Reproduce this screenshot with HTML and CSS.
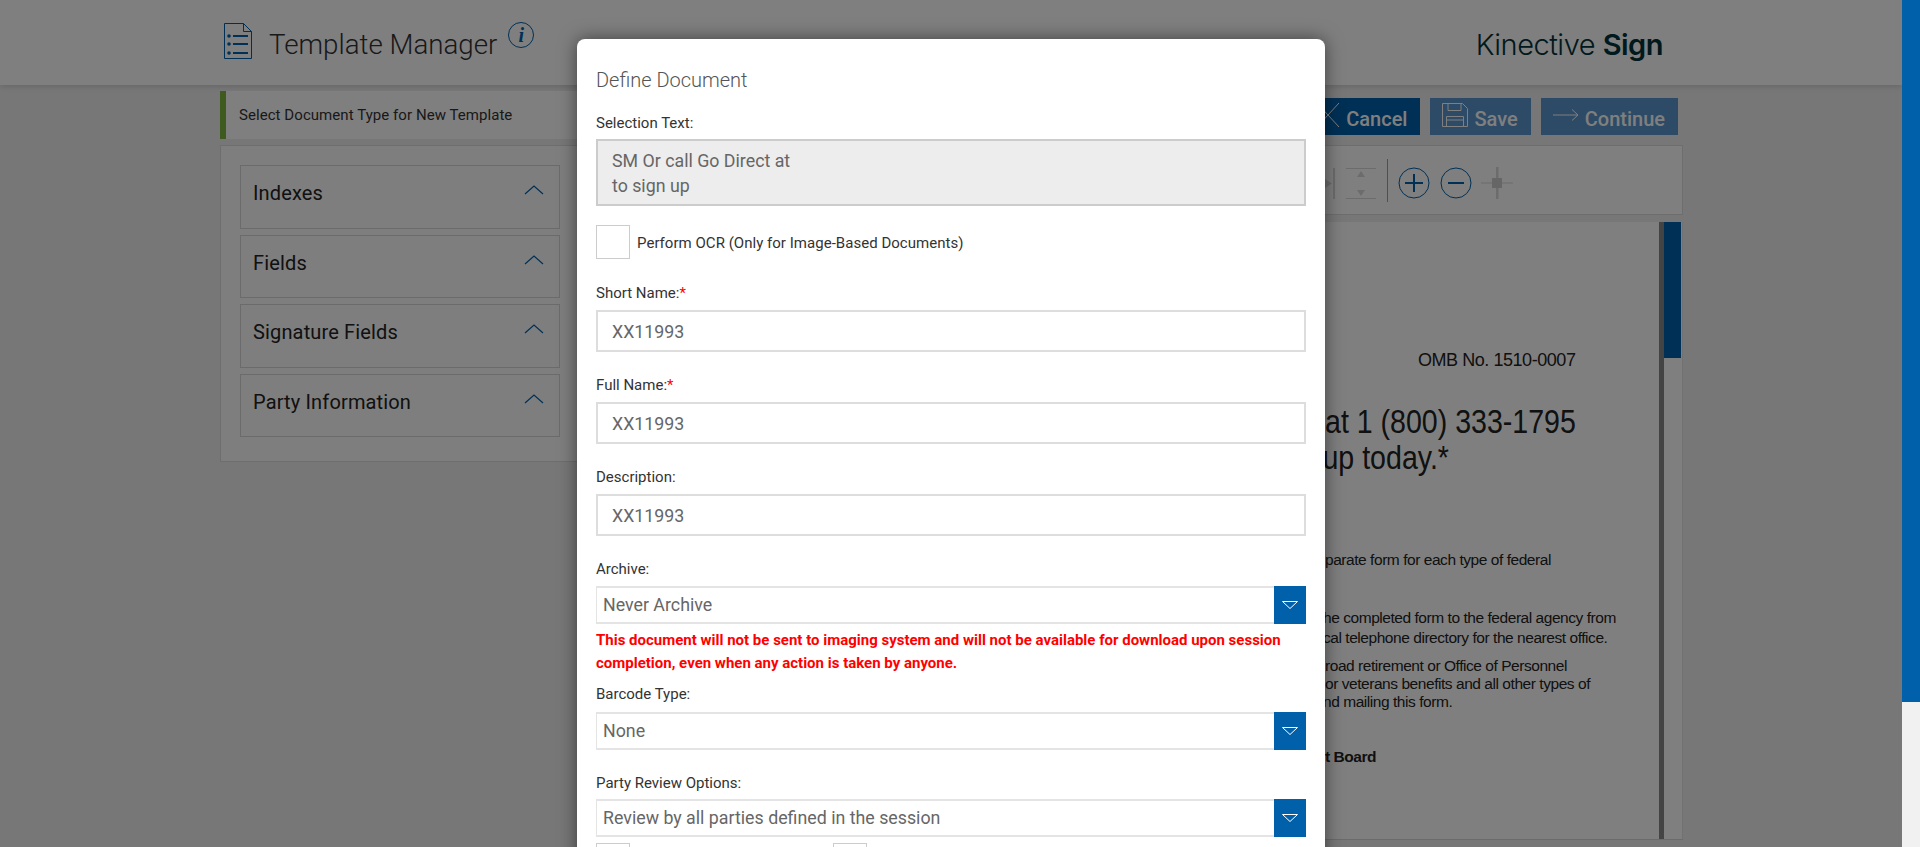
FILE: index.html
```html
<!DOCTYPE html>
<html lang="en">

<head>
    <meta charset="UTF-8">
    <title>Template Manager</title>
    <link rel="stylesheet" href="styles.css">
</head>

<body>
    <div class="page">
        <header class="header">
            <div class="brand">
                <svg class="brand-icon" width="28" height="36" viewBox="0 0 28 36" fill="none" stroke="#0060aa">
                    <path d="M.5.5h19l8 8v27H.5z" />
                    <path d="M19.5.5v8h8" />
                    <path d="M9 13h15M9 21h15M9 30h15" stroke-width="2" />
                    <circle cx="5" cy="13" r="1.8" fill="#0060aa" stroke="none" />
                    <circle cx="5" cy="21" r="1.8" fill="#0060aa" stroke="none" />
                    <circle cx="5" cy="30" r="1.8" fill="#0060aa" stroke="none" />
                </svg>
                <h1 class="brand-title">Template Manager</h1>
                <span class="info-badge">i</span>
            </div>
            <div class="logo">Kinective <b>Sign</b></div>
        </header>

        <main class="main">
            <div class="top-row">
                <div class="notice">Select Document Type for New Template</div>
                <div class="actions">
                    <a class="btn btn-cancel">
                        <svg width="24" height="24" viewBox="0 0 24 24" fill="none" stroke="#fff"><path d="M1 0l22 24M23 0L1 24" /></svg>
                        Cancel
                    </a>
                    <a class="btn btn-off">
                        <svg width="26" height="24" viewBox="0 0 26 24" fill="none" stroke="#fff"><path d="M.5.5h20l5 5v18H.5z" /><path d="M6 .5v7h13v-7M4.500 23.500v-10h17v10M4.500 17h17" /></svg>
                        Save
                    </a>
                    <a class="btn btn-off">
                        <svg width="26" height="12" viewBox="0 0 26 12" fill="none" stroke="#fff"><path d="M0 6h25M19 .5L25 6l-6 5.500" /></svg>
                        Continue
                    </a>
                </div>
            </div>

            <div class="content">
                <aside class="side-panel">
                    <div class="acc-item"><span>Indexes</span><svg class="chev" width="20" height="10" viewBox="0 0 20 10"><path d="M1 9l9-8 9 8" /></svg></div>
                    <div class="acc-item"><span>Fields</span><svg class="chev" width="20" height="10" viewBox="0 0 20 10"><path d="M1 9l9-8 9 8" /></svg></div>
                    <div class="acc-item"><span>Signature Fields</span><svg class="chev" width="20" height="10" viewBox="0 0 20 10"><path d="M1 9l9-8 9 8" /></svg></div>
                    <div class="acc-item"><span>Party Information</span><svg class="chev" width="20" height="10" viewBox="0 0 20 10"><path d="M1 9l9-8 9 8" /></svg></div>
                </aside>

                <section class="viewer">
                    <div class="toolbar">
                        <svg class="tool tool-h" width="10" height="31" viewBox="0 0 10 31" fill="#d8d8d8"><path d="M0 11l7 4.500L0 20z" /><path d="M8 0h2v31H8z" /></svg>
                        <svg class="tool tool-v" width="30" height="31" viewBox="0 0 30 31" fill="#d8d8d8"><path d="M0 0h30v1H0zM0 30h30v1H0zM15 3l4 6h-8zM15 28l-4-6h8z" /></svg>
                        <span class="tool-sep"></span>
                        <svg class="tool tool-zoom" width="32" height="32" viewBox="0 0 32 32" fill="none" stroke="#0060aa"><circle cx="16" cy="16" r="15" /><path d="M16 7v18M7 16h18" stroke-width="2" /></svg>
                        <svg class="tool tool-zoom" width="32" height="32" viewBox="0 0 32 32" fill="none" stroke="#0060aa"><circle cx="16" cy="16" r="15" /><path d="M8 16h16" stroke-width="2" /></svg>
                        <svg class="tool tool-fit" width="32" height="32" viewBox="0 0 32 32" fill="#d8d8d8"><path d="M0 15.500h32v1H0zM15 0h2.500v32H15z" /><path d="M11 11h10v10H11z" fill="#ccc" /></svg>
                    </div>
                    <div class="doc">
                        <div class="doc-page">
                            <p class="doc-omb">OMB No. 1510-0007</p>
                            <p class="doc-big">at 1 (800) 333-1795<br><span class="doc-big2">up today.*</span></p>
                            <p class="doc-p doc-p1">parate form for each type of federal</p>
                            <p class="doc-p doc-p2"><span class="doc-in1">he completed form to the federal agency from</span><br><span class="doc-in2">cal telephone directory for the nearest office.</span></p>
                            <p class="doc-p doc-p3">road retirement or Office of Personnel<br>or veterans benefits and all other types of<br><span class="doc-in4">nd mailing this form.</span></p>
                            <p class="doc-p doc-board"><b>t Board</b></p>
                        </div>
                        <div class="doc-scroll"><div class="doc-thumb"></div></div>
                    </div>
                </section>
            </div>
        </main>

        <div class="overlay"></div>

        <div class="modal">
            <h2 class="modal-title">Define Document</h2>

            <label class="field-label label-selection">Selection Text:</label>
            <div class="text-area">SM Or call Go Direct at<br>to sign up</div>

            <div class="check-row">
                <span class="check-box"></span>
                <span class="check-label">Perform OCR (Only for Image-Based Documents)</span>
            </div>

            <label class="field-label label-short">Short Name:<span class="req">*</span></label>
            <div class="text-input">XX11993</div>

            <label class="field-label label-next">Full Name:<span class="req">*</span></label>
            <div class="text-input">XX11993</div>

            <label class="field-label label-next">Description:</label>
            <div class="text-input">XX11993</div>

            <label class="field-label label-next">Archive:</label>
            <div class="select-box">
                <span class="select-text">Never Archive</span>
                <span class="select-btn"><svg width="16" height="8" viewBox="0 0 16 8" fill="none" stroke="#fff"><path d="M.500.500h15L8 7.500z" /></svg></span>
            </div>
            <p class="warn">This document will not be sent to imaging system and will not be available for download upon session completion, even when any action is taken by anyone.</p>

            <label class="field-label label-barcode">Barcode Type:</label>
            <div class="select-box">
                <span class="select-text">None</span>
                <span class="select-btn"><svg width="16" height="8" viewBox="0 0 16 8" fill="none" stroke="#fff"><path d="M.500.500h15L8 7.500z" /></svg></span>
            </div>

            <label class="field-label label-party">Party Review Options:</label>
            <div class="select-box">
                <span class="select-text">Review by all parties defined in the session</span>
                <span class="select-btn"><svg width="16" height="8" viewBox="0 0 16 8" fill="none" stroke="#fff"><path d="M.500.500h15L8 7.500z" /></svg></span>
            </div>

            <div class="check-pair">
                <span class="check-box"></span>
                <span class="check-box"></span>
            </div>
        </div>
    </div>

    <div class="scrollbar"><div class="scrollbar-thumb"></div></div>
</body>

</html>
```

FILE: styles.css
```css
* {
    padding: 0;
    margin: 0;
    box-sizing: border-box;
}

html,
body {
    height: 847px;
    overflow: hidden;
}

body {
    display: flex;
    font-family: Roboto, "Liberation Sans", sans-serif;
    color: #333;
    background: #f1f1f1;
}

.page {
    position: relative;
    flex: 1;
    height: 847px;
    overflow: hidden;
    background: #eeeeee;
}

.scrollbar {
    width: 18px;
    height: 847px;
    background: #f1f1f1;
}

.scrollbar-thumb {
    height: 702px;
    background: #0060aa;
}

/* header */
.header {
    display: flex;
    justify-content: space-between;
    align-items: center;
    height: 85px;
    padding: 0 239px 0 224px;
    background: #fff;
    box-shadow: 0 2px 5px rgba(0, 0, 0, 0.12);
}

.brand {
    display: flex;
    align-items: flex-start;
}

.brand-icon {
    margin-top: 1px;
}

.brand-title {
    margin: 5px 0 0 17px;
    font-size: 27.7px;
    font-weight: 300;
    line-height: 36px;
    color: #333;
}

.info-badge {
    width: 26px;
    height: 26px;
    margin: 0 0 0 11px;
    border: 1px solid #0060aa;
    border-radius: 50%;
    font-family: "Liberation Serif", serif;
    font-size: 20px;
    font-style: italic;
    font-weight: bold;
    line-height: 24px;
    text-align: center;
    color: #0060aa;
}

.logo {
    margin-top: 4px;
    font-family: Inter, sans-serif;
    font-size: 29px;
    font-weight: 300;
    letter-spacing: -0.5px;
    color: #00333a;
}

.logo b {
    font-weight: 600;
}

/* main */
.main {
    padding: 6px 219px 0 220px;
}

.top-row {
    display: flex;
    height: 54px;
}

.notice {
    flex: 1;
    height: 48px;
    padding-left: 13px;
    border-left: 6px solid #7db53c;
    font-size: 15px;
    letter-spacing: 0.06px;
    line-height: 49px;
    background: #fff;
}

.actions {
    display: flex;
    gap: 10px;
    margin: 7px 5px 0 0;
}

.btn {
    display: flex;
    align-items: center;
    gap: 6px;
    height: 37px;
    padding: 4px 13px 0 12px;
    font-size: 20px;
    font-weight: 500;
    color: #fff;
}

.btn svg {
    margin-bottom: 7px;
}

.btn-cancel {
    background: #0060aa;
}

.btn-off {
    background: #5a94cc;
}

.content {
    display: flex;
    gap: 10px;
}

.side-panel {
    display: flex;
    flex-direction: column;
    gap: 6px;
    width: 360px;
    height: 317px;
    padding: 19px;
    border: 1px solid #ddd;
    background: #fcfcfc;
}

.acc-item {
    display: flex;
    justify-content: space-between;
    height: 63.5px;
    padding: 14px 15px 0 12px;
    border: 1px solid #d6d6d6;
    font-size: 20px;
    letter-spacing: 0.15px;
    line-height: 26px;
    color: #222;
}

.chev {
    margin-top: 5px;
    fill: none;
    stroke: #0060aa;
    stroke-width: 1.2;
}

.viewer {
    flex: 1;
}

.toolbar {
    display: flex;
    align-items: center;
    height: 70px;
    padding-left: 734px;
    border: 1px solid #ddd;
    background: #fff;
}

.tool {
    margin-top: 6px;
}

.tool-v {
    margin-left: 11px;
}

.tool-sep {
    width: 1px;
    height: 43px;
    margin: 0 10px 0 11px;
    background: #a0a0a0;
}

.tool-zoom {
    margin-right: 10px;
}

.tool-fit {
    margin-left: -1px;
}

.doc {
    display: flex;
    height: 618px;
    margin-top: 7px;
    border-bottom: 1px solid #d6d6d6;
    background: #fff;
}

.doc-page {
    flex: 1;
    overflow: hidden;
    border-right: 5px solid #888;
    font-family: "Liberation Sans", Arial, sans-serif;
    color: #222;
    white-space: nowrap;
}

.doc-scroll {
    width: 19px;
    padding-right: 1px;
    border-right: 1px solid #e4e4e4;
}

.doc-thumb {
    height: 136px;
    background: #0060aa;
}

.doc-omb {
    margin: 129px 0 0 828px;
    font-size: 18px;
    letter-spacing: -0.45px;
    line-height: 18px;
}

.doc-big {
    margin: 34px 0 0 735px;
    font-size: 34px;
    line-height: 36px;
    transform: scaleX(0.84);
    transform-origin: left;
}

.doc-big2 {
    margin-left: -3px;
}

.doc-p {
    margin-left: 735px;
    font-size: 15.5px;
    letter-spacing: -0.45px;
    line-height: 18.500px;
}

.doc-p1 {
    margin-top: 76px;
}

.doc-p2 {
    margin-top: 38px;
    line-height: 20px;
}

.doc-p3 {
    margin-top: 9px;
    line-height: 18px;
}

.doc-board {
    margin-top: 37px;
}

.doc-in1,
.doc-in2,
.doc-in4 {
    margin-left: -2px;
}

/* dim layer and dialog */
.overlay {
    position: absolute;
    inset: 0;
    background: rgba(0, 0, 0, 0.5);
}

.modal {
    position: absolute;
    left: 577px;
    top: 39px;
    width: 748px;
    height: 840px;
    padding: 0 19px;
    border-radius: 8px 8px 0 0;
    background: #fff;
    box-shadow: 0 0 18px rgba(0, 0, 0, 0.5);
}

.modal-title {
    margin-top: 28px;
    font-size: 20px;
    font-weight: 300;
    line-height: 26px;
    color: #555;
}

.field-label {
    display: block;
    font-size: 15px;
    line-height: 18px;
    color: #333;
}

.label-selection {
    margin-top: 21px;
    margin-bottom: 7px;
}

.label-short {
    margin-top: 25px;
    margin-bottom: 8px;
}

.label-next {
    margin-top: 24px;
    margin-bottom: 8px;
}

.label-barcode {
    margin-top: 10px;
    margin-bottom: 9px;
}

.label-party {
    margin-top: 24px;
    margin-bottom: 7px;
}

.req {
    color: #f00;
}

.text-area {
    height: 67px;
    padding: 7px 14px;
    border: 2px solid #ccc;
    font-size: 17.8px;
    line-height: 25px;
    color: #666;
    background: #ededed;
}

.check-row {
    display: flex;
    align-items: center;
    gap: 7px;
    margin-top: 19px;
}

.check-box {
    width: 34px;
    height: 34px;
    border: 1px solid #ccc;
    background: #fff;
}

.check-label {
    margin-top: 1px;
    font-size: 15px;
    letter-spacing: 0.03px;
}

.text-input {
    height: 42px;
    padding: 0 14px;
    border: 2px solid #ddd;
    font-size: 17.8px;
    line-height: 40px;
    color: #666;
}

.select-box {
    display: flex;
    justify-content: space-between;
    height: 38px;
    border: 2px solid #e4e4e4;
    border-right: 0;
    border-left-width: 1px;
}

.select-text {
    padding-left: 6px;
    font-size: 17.8px;
    line-height: 34px;
    color: #666;
}

.select-btn {
    display: flex;
    align-items: center;
    justify-content: center;
    width: 32px;
    margin: -2px 0;
    background: #0060aa;
}

.warn {
    margin-top: 5px;
    font-size: 15px;
    font-weight: bold;
    line-height: 23px;
    color: #f00;
}

.check-pair {
    display: flex;
    gap: 203px;
    margin-top: 6px;
}
```
